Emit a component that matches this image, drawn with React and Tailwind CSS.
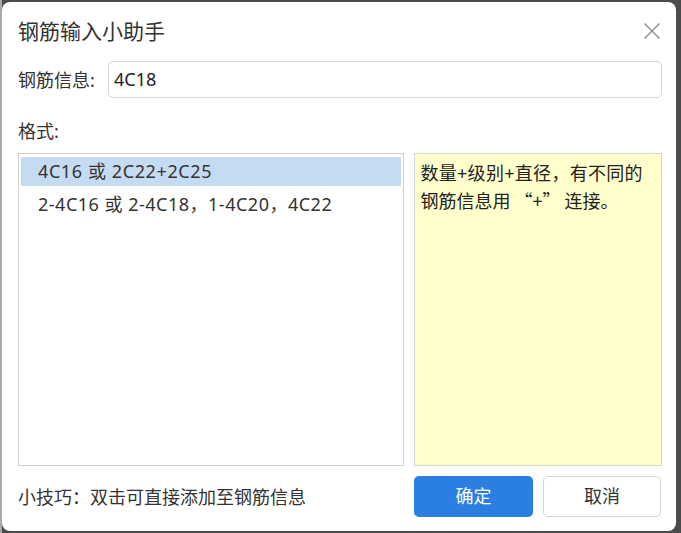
import React from "react";

export default function App() {
  const font = { fontFamily: '"Noto Sans", "Noto Sans CJK SC", sans-serif' };
  const cjk = { fontFamily: '"Noto Sans CJK SC", "Noto Sans", sans-serif' };
  return (
    <div className="w-[681px] h-[533px] bg-[#4b4b4b] flex overflow-hidden" style={font}>
      <div className="w-[2px] h-full bg-[#a8a8a8]" />
      <div className="mt-[2px] w-[674px] h-[529px] rounded-[8px] bg-white flex flex-col pl-[16px] pr-[14px] text-[#333]">
        <div className="h-[59px] flex items-center justify-between shrink-0">
          <div className="text-[21px] leading-[26px] -mt-[2px]">钢筋输入小助手</div>
          <svg width="18" height="18" viewBox="0 0 18 18" className="mr-[1px] -mt-[2px]">
            <path d="M1.5 1.5 L16.5 16.5 M16.5 1.5 L1.5 16.5" stroke="#8a8a8a" strokeWidth="1.4" fill="none" />
          </svg>
        </div>
        <div className="h-[37px] flex items-center shrink-0">
          <div className="w-[90px] text-[18px] leading-[24px] shrink-0">钢筋信息:</div>
          <div className="flex-1 h-[37px] border border-[#d4d4d4] rounded-[5px] flex items-center pl-[5px] text-[18px] text-[#222]">
            4C18
          </div>
        </div>
        <div className="mt-[21px] h-[24px] text-[18px] leading-[24px] shrink-0">格式:</div>
        <div className="mt-[10px] h-[313px] flex gap-[10px] shrink-0">
          <div className="w-[387px] h-full border border-[#cfcfcf] p-[2px] pt-[3px] flex flex-col">
            <div className="h-[29px] bg-[#c5dbf2] flex items-center pl-[17px] text-[18px] tracking-[0.6px]">4C16 或 2C22+2C25</div>
            <div className="h-[37px] flex items-center pl-[17px] text-[18px] tracking-[0.5px]">2-4C16 或 2-4C18，1-4C20，4C22</div>
          </div>
          <div className="w-[248px] h-full border border-[#d4d4d4] bg-[#ffffcc] pl-[5px] pt-[6px] text-[18px] leading-[27px] text-[#222]">
            <div className="tracking-[0.3px]">数量+级别+直径，有不同的</div>
            <div style={cjk}>钢筋信息用 “+” 连接。</div>
          </div>
        </div>
        <div className="mt-[10px] h-[41px] flex items-center justify-between shrink-0">
          <div className="text-[18px] leading-[24px]">小技巧：双击可直接添加至钢筋信息</div>
          <div className="flex gap-[10px] mr-[1px]">
            <button className="w-[119px] h-[41px] rounded-[5px] bg-[#2b7fe1] text-white text-[18px]">确定</button>
            <button className="w-[118px] h-[41px] rounded-[5px] border border-[#d4d4d4] bg-white text-[#333] text-[18px]">取消</button>
          </div>
        </div>
      </div>
    </div>
  );
}
